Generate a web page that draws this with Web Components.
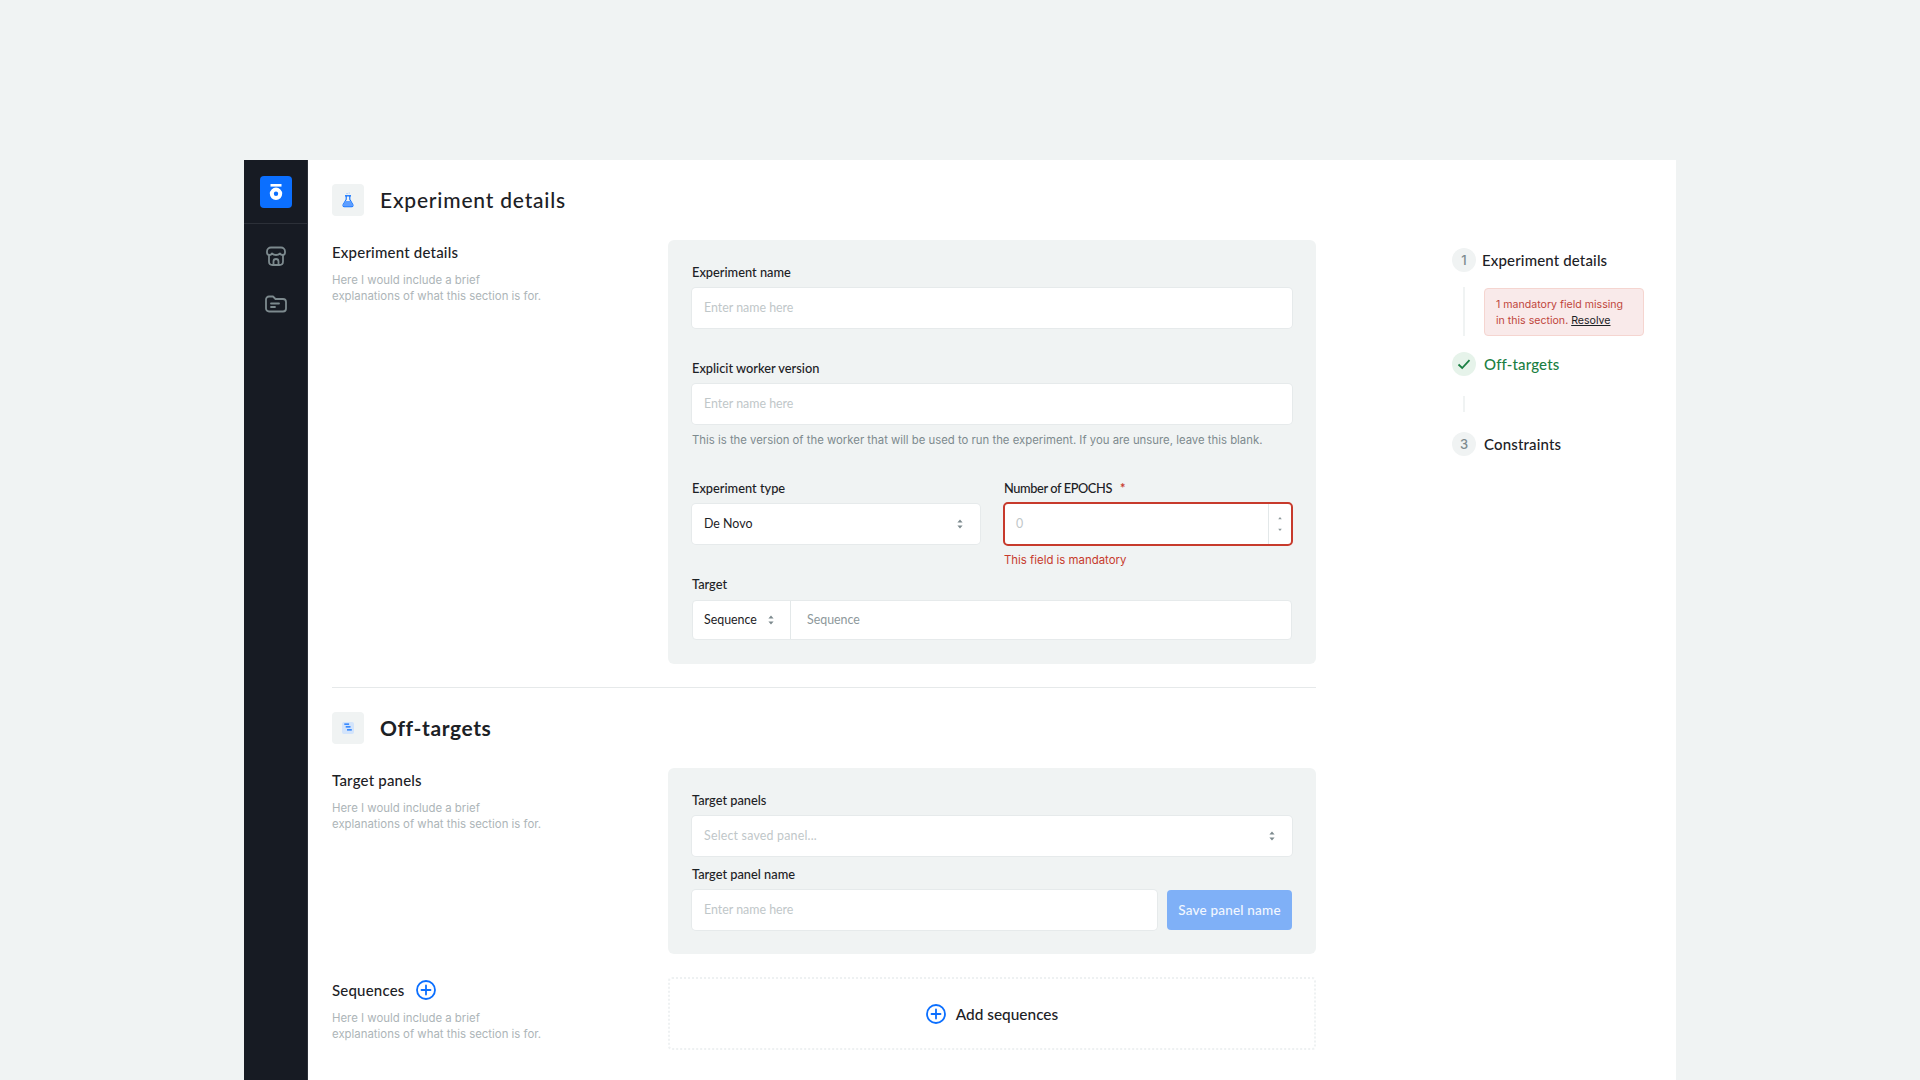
<!DOCTYPE html>
<html>
<head>
  <style>
    html, body { margin: 0; height: 1080px; overflow: hidden; background: #f0f3f3; }
    body { padding: 160px 0 0 244px; box-sizing: border-box; font-family: "Lato", "Liberation Sans", sans-serif; color: #1c2125; }
    [slot] svg { display: block; }
  </style>
</head>
<body>
  <app-shell>
    <side-nav slot="nav"></side-nav>

    <section-title text="Experiment details">
      <svg slot="icon" width="16" height="16" viewBox="0 0 16 16">
        <circle cx="7" cy="1.600" r=".6" fill="#8ab8ff"/><circle cx="9.200" cy="1" r=".6" fill="#8ab8ff"/>
        <path d="M5 3.800h6" stroke="#0b6fff" stroke-width="1.300"/>
        <path d="M6.200 4v3.400L3.200 12.600c-.6 1 .1 2 1.100 2h7.400c1 0 1.700-1 1.100-2L9.800 7.400V4" fill="none" stroke="#0b6fff" stroke-width="1.100"/>
        <path d="M5.300 9h5.400l2 3.600c.5 1-.1 2-1 2H4.300c-.9 0-1.500-1-1-2z" fill="#5d9eff"/>
      </svg>
    </section-title>

    <form-row heading="Experiment details">
      <form-panel>
        <form-field label="Experiment name"><input-box placeholder="Enter name here"></input-box></form-field>
        <form-field label="Explicit worker version" style="margin-top:32px" hint="This is the version of the worker that will be used to run the experiment. If you are unsure, leave this blank.">
          <input-box placeholder="Enter name here"></input-box>
        </form-field>
        <div style="display:grid;grid-template-columns:288px 288px;gap:24px;margin-top:32px">
          <form-field label="Experiment type"><select-box value="De Novo"></select-box></form-field>
          <form-field label="Number of EPOCHS" style="--label-spacing:-.4px" required error="This field is mandatory"><number-box placeholder="0" invalid></number-box></form-field>
        </div>
        <form-field label="Target" style="margin-top:8px"><target-box></target-box></form-field>
      </form-panel>
    </form-row>

    <hr-line></hr-line>

    <section-title text="Off-targets" strong>
      <svg slot="icon" width="16" height="16" viewBox="0 0 16 16">
        <rect x="2" y="2" width="12" height="12" rx="2" fill="#d3e4fb"/>
        <path d="M4.300 4.200h4.800M5.700 6.900h4.800M7 9.800h4.800" stroke="#0b6fff" stroke-width="1.300"/>
      </svg>
    </section-title>

    <form-row heading="Target panels">
      <form-panel>
        <form-field label="Target panels"><select-box placeholder="Select saved panel..."></select-box></form-field>
        <form-field label="Target panel name" style="margin-top:10px">
          <div style="display:flex;gap:10px">
            <input-box placeholder="Enter name here" style="flex:1"></input-box>
            <save-button>Save panel name</save-button>
          </div>
        </form-field>
      </form-panel>
    </form-row>

    <form-row heading="Sequences" adder style="margin-top:23px">
      <add-box>Add sequences</add-box>
    </form-row>

    <step-list slot="steps"></step-list>
  </app-shell>

  <script>
    const plusIcon = `<svg width="20" height="20" viewBox="0 0 20 20" style="display:block;flex:none"><circle cx="10" cy="10" r="9" fill="none" stroke="#0b6fff" stroke-width="1.800"/><path d="M10 5.500v9M5.500 10h9" stroke="#0b6fff" stroke-width="1.800" stroke-linecap="round"/></svg>`;
    const upDown = `<svg width="6" height="12" viewBox="0 0 6 12" style="display:block;flex:none"><path d="M3 1.500 5.600 4.500H.4zM3 10.500 .4 7.500h5.200z" fill="#7d8a8e"/></svg>`;
    const labelFont = `"Lato", "Liberation Sans", sans-serif`;
    const bodyFont = `"Inter", "Liberation Sans", sans-serif`;

    class AppShell extends HTMLElement {
      constructor() {
        super();
        this.attachShadow({ mode: 'open' }).innerHTML = `
          <style>
            :host { display: flex; width: 1432px; height: 920px; background: #fff; overflow: hidden; }
            main { width: 984px; padding: 24px 0 0 24px; flex: none; }
            aside { padding: 88px 0 0 136px; }
          </style>
          <slot name="nav"></slot>
          <main><slot></slot></main>
          <aside><slot name="steps"></slot></aside>`;
      }
    }

    class SideNav extends HTMLElement {
      constructor() {
        super();
        this.attachShadow({ mode: 'open' }).innerHTML = `
          <style>
            :host { display: block; width: 64px; flex: none; height: 100%; background: #171b23; box-sizing: border-box; border-right: 1px solid #2c3038; }
            .top { height: 64px; box-sizing: border-box; padding: 16px; border-bottom: 1px solid #2c3038; }
            .logo { width: 32px; height: 32px; border-radius: 4px; background: #0b6fff; }
            .items { display: flex; flex-direction: column; align-items: center; gap: 24px; padding-top: 20px; }
            svg { display: block; }
          </style>
          <div class="top">
            <svg class="logo" viewBox="0 0 32 32">
              <rect x="10.500" y="8" width="11" height="2.600" fill="#fff"/>
              <circle cx="16" cy="17.800" r="4.200" fill="none" stroke="#fff" stroke-width="4"/>
            </svg>
          </div>
          <div class="items">
            <svg width="24" height="24" viewBox="0 0 24 24" fill="none" stroke="#7d8a8e" stroke-width="1.800" stroke-linejoin="round">
              <path d="M7 3.500h10c2.200 0 4 1.800 4 4v1c0 1.400-1.100 2.500-2.500 2.500-1 0-2-.6-2.500-1.500-.9.9-2.400 1.500-4 1.500s-3.100-.6-4-1.500c-.5.9-1.500 1.500-2.500 1.500C4.100 11 3 9.900 3 8.500v-1c0-2.200 1.800-4 4-4z"/>
              <path d="M5 11v6.500c0 2 1.500 3.500 3.500 3.500h7c2 0 3.500-1.500 3.500-3.500V11"/>
              <path d="M9.500 21v-3.500a2.500 2.500 0 0 1 5 0V21"/>
            </svg>
            <svg width="24" height="24" viewBox="0 0 24 24" fill="none" stroke="#7d8a8e" stroke-width="1.800" stroke-linejoin="round" stroke-linecap="round">
              <path d="M2 7.500a3 3 0 0 1 3-3h4l2.500 2.500H19a3 3 0 0 1 3 3v6.500a3 3 0 0 1-3 3H5a3 3 0 0 1-3-3z"/>
              <path d="M7 11.500h8M7 15h4"/>
            </svg>
          </div>`;
      }
    }

    class SectionTitle extends HTMLElement {
      connectedCallback() {
        const weight = this.hasAttribute('strong') ? 700 : 500;
        const spacing = this.hasAttribute('strong') ? '.6px' : '.8px';
        this.attachShadow({ mode: 'open' }).innerHTML = `
          <style>
            :host { display: flex; align-items: center; gap: 16px; height: 32px; }
            .icon { width: 32px; height: 32px; border-radius: 4px; background: #f0f3f3; display: flex; align-items: center; justify-content: center; }
            h2 { margin: 0; font: ${weight} 21px/32px ${labelFont}; letter-spacing: ${spacing}; color: #1c2125; }
          </style>
          <div class="icon"><slot name="icon"></slot></div>
          <h2>${this.getAttribute('text')}</h2>`;
      }
    }

    class FormRow extends HTMLElement {
      connectedCallback() {
        const adder = this.hasAttribute('adder') ? plusIcon : '';
        this.attachShadow({ mode: 'open' }).innerHTML = `
          <style>
            :host { display: grid; grid-template-columns: 336px 648px; margin-top: 24px; }
            .head { display: flex; align-items: center; gap: 11px; height: 24px; font: 500 15px/24px ${labelFont}; letter-spacing: .2px; color: #1c2125; }
            :host([adder]) .head { margin-top: 1px; }
            p { margin: 8px 0 0; font: 400 11.400px/16px ${bodyFont}; color: #adb5b8; }
          </style>
          <div>
            <div class="head">${this.getAttribute('heading')}${adder}</div>
            <p>Here I would include a brief<br>explanations of what this section is for.</p>
          </div>
          <div><slot></slot></div>`;
      }
    }

    class FormPanel extends HTMLElement {
      constructor() {
        super();
        this.attachShadow({ mode: 'open' }).innerHTML = `
          <style>:host { display: block; background: #f0f3f3; border-radius: 6px; padding: 24px; }</style>
          <slot></slot>`;
      }
    }

    class FormField extends HTMLElement {
      connectedCallback() {
        const hint = this.getAttribute('hint');
        const error = this.getAttribute('error');
        this.attachShadow({ mode: 'open' }).innerHTML = `
          <style>
            :host { display: block; }
            label { display: block; height: 16px; margin-bottom: 8px; font: 500 12.800px/16px ${labelFont}; letter-spacing: var(--label-spacing, 0); color: #1c2125; }
            b { color: #c73a2c; font-weight: 700; margin-left: 8px; }
            .hint { margin-top: 8px; font: 400 11.350px/16px ${bodyFont}; color: #7d8a8e; white-space: nowrap; }
            .error { margin-top: 8px; font: 400 11.400px/16px ${bodyFont}; color: #c73a2c; }
          </style>
          <label>${this.getAttribute('label')}${this.hasAttribute('required') ? '<b>*</b>' : ''}</label>
          <slot></slot>
          ${hint ? `<div class="hint">${hint}</div>` : ''}
          ${error ? `<div class="error">${error}</div>` : ''}`;
      }
    }

    const boxStyle = `
      :host { display: flex; align-items: center; box-sizing: border-box; height: 40px; background: #fff; box-shadow: 0 0 0 1px #e6eaeb; border-radius: 4px; font: 400 12.400px/16px ${labelFont}; color: #1c2125; }
      .ph { color: #bfc7c9; }`;

    class InputBox extends HTMLElement {
      connectedCallback() {
        this.attachShadow({ mode: 'open' }).innerHTML = `
          <style>${boxStyle} :host { padding: 0 12px; }</style>
          <span class="ph">${this.getAttribute('placeholder')}</span>`;
      }
    }

    class SelectBox extends HTMLElement {
      connectedCallback() {
        const value = this.getAttribute('value');
        this.attachShadow({ mode: 'open' }).innerHTML = `
          <style>${boxStyle} :host { padding: 0 17px 0 12px; justify-content: space-between; }</style>
          <span class="${value ? '' : 'ph'}" style="${value ? '' : 'letter-spacing:.2px'}">${value || this.getAttribute('placeholder')}</span>
          ${upDown}`;
      }
    }

    class NumberBox extends HTMLElement {
      connectedCallback() {
        this.attachShadow({ mode: 'open' }).innerHTML = `
          <style>${boxStyle}
            :host { height: 44px; margin: -2px -1px; border: 2px solid #c73a2c; box-shadow: none; border-radius: 5px; padding-left: 11px; justify-content: space-between; }
            .step { width: 23px; height: 100%; box-sizing: border-box; border-left: 1px solid #e3e8e9; display: flex; align-items: center; justify-content: center; }
            svg { display: block; }
          </style>
          <span class="ph">${this.getAttribute('placeholder')}</span>
          <div class="step"><svg width="6" height="18" viewBox="0 0 6 18"><path d="M3 2 4.800 4.200H1.200zM3 16 1.200 13.800h3.600z" fill="#8d989b"/></svg></div>`;
      }
    }

    class TargetBox extends HTMLElement {
      connectedCallback() {
        this.attachShadow({ mode: 'open' }).innerHTML = `
          <style>${boxStyle}
            :host { box-shadow: none; border: 1px solid #e6eaeb; }
            .sel { width: 98px; height: 100%; box-sizing: border-box; padding: 0 16px 0 11px; border-right: 1px solid #e3e8e9; display: flex; align-items: center; justify-content: space-between; }
            .val { padding-left: 16px; color: #8d989b; }
          </style>
          <div class="sel"><span>Sequence</span>${upDown}</div>
          <span class="val">Sequence</span>`;
      }
    }

    class SaveButton extends HTMLElement {
      constructor() {
        super();
        this.attachShadow({ mode: 'open' }).innerHTML = `
          <style>
            :host { display: flex; align-items: center; justify-content: center; box-sizing: border-box; width: 125px; height: 40px; background: #7fb0f7; border-radius: 4px; color: #f2f7ff; font: 500 13.500px/16px ${labelFont}; letter-spacing: .2px; }
          </style>
          <slot></slot>`;
      }
    }

    class AddBox extends HTMLElement {
      constructor() {
        super();
        this.attachShadow({ mode: 'open' }).innerHTML = `
          <style>
            :host { display: flex; align-items: center; justify-content: center; gap: 10px; box-sizing: border-box; height: 73px; border: 2px dotted #eef1f2; border-radius: 4px; font: 500 15.400px/20px ${labelFont}; color: #1c2125; }
          </style>
          ${plusIcon}<slot></slot>`;
      }
    }

    class HrLine extends HTMLElement {
      constructor() {
        super();
        this.attachShadow({ mode: 'open' }).innerHTML = `
          <style>:host { display: block; height: 1px; background: #e6e9ea; margin: 23px 0 24px; }</style>`;
      }
    }

    class StepList extends HTMLElement {
      constructor() {
        super();
        this.attachShadow({ mode: 'open' }).innerHTML = `
          <style>
            :host { display: block; width: 192px; font: 500 15px/23px ${labelFont}; letter-spacing: .15px; color: #1c2125; }
            .step { display: flex; align-items: center; gap: 8px; height: 24px; }
            .dot { width: 24px; height: 24px; border-radius: 50%; background: #f0f3f3; color: #7d8a8e; font: 500 13px/24px ${bodyFont}; text-align: center; letter-spacing: 0; }
            .done { color: #1b7f43; }
            .done .dot { background: #e6f3ea; display: flex; align-items: center; justify-content: center; }
            .wrap { display: flex; }
            .line { width: 2px; background: #f0f3f3; margin-left: 11px; }
            .alert { box-sizing: border-box; width: 160px; height: 48px; margin-left: 19px; padding: 8px 11px 0; background: #f9eaea; border: 1px solid #f5d5d0; border-radius: 4px; font: 400 10.600px/16px ${bodyFont}; letter-spacing: 0; color: #c0463c; white-space: nowrap; }
            .alert a { color: #1c2125; text-decoration: underline; }
          </style>
          <div class="step" style="gap:6px"><div class="dot">1</div><span>Experiment details</span></div>
          <div class="wrap" style="margin-top:15px;height:49px"><div class="line"></div><div class="alert" style="margin-top:1px">1 mandatory field missing<br>in this section. <a>Resolve</a></div></div>
          <div class="step done" style="margin-top:16px"><div class="dot"><svg width="14" height="14" viewBox="0 0 14 14"><path d="M1.500 7.500 5.200 11 12.500 3.200" fill="none" stroke="#1b7f43" stroke-width="1.800"/></svg></div><span>Off-targets</span></div>
          <div class="wrap" style="margin-top:20px;height:16px"><div class="line"></div></div>
          <div class="step" style="margin-top:20px"><div class="dot">3</div><span>Constraints</span></div>`;
      }
    }

    customElements.define('app-shell', AppShell);
    customElements.define('side-nav', SideNav);
    customElements.define('section-title', SectionTitle);
    customElements.define('form-row', FormRow);
    customElements.define('form-panel', FormPanel);
    customElements.define('form-field', FormField);
    customElements.define('input-box', InputBox);
    customElements.define('select-box', SelectBox);
    customElements.define('number-box', NumberBox);
    customElements.define('target-box', TargetBox);
    customElements.define('save-button', SaveButton);
    customElements.define('add-box', AddBox);
    customElements.define('hr-line', HrLine);
    customElements.define('step-list', StepList);
  </script>
</body>
</html>
